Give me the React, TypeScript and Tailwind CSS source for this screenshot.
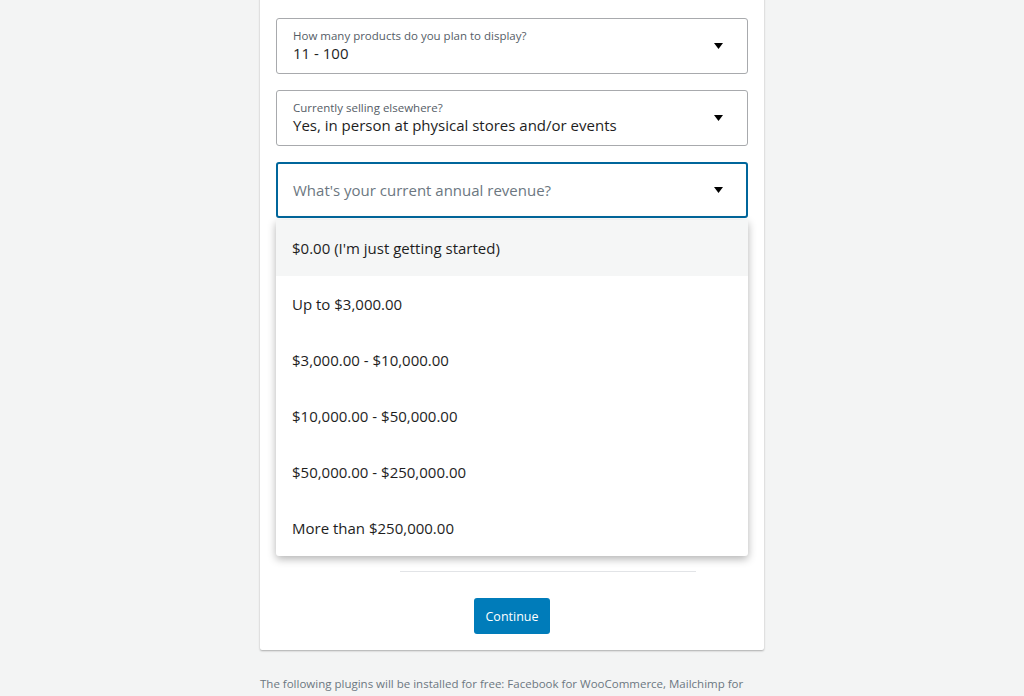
import React from "react";

const font = { fontFamily: '"Open Sans", "Noto Sans", sans-serif' };

function Arrow() {
  return (
    <svg width="9" height="6" viewBox="0 0 9 6" className="shrink-0">
      <path d="M0 0 L9 0 L4.5 6 Z" fill="#000" />
    </svg>
  );
}

function SelectBox({ label, value }: { label: string; value: string }) {
  return (
    <div className="h-[56px] rounded-[3px] border border-[#a8aaad] bg-white flex items-center pl-4 pr-[24px]">
      <div className="flex-1 flex flex-col pb-[2px]">
        <span className="text-[11.5px] leading-[15px] text-[#555d66]">{label}</span>
        <span className="text-[15px] leading-[20px] text-[#1e1e1e]">{value}</span>
      </div>
      <Arrow />
    </div>
  );
}

const options = [
  "$0.00 (I'm just getting started)",
  "Up to $3,000.00",
  "$3,000.00 - $10,000.00",
  "$10,000.00 - $50,000.00",
  "$50,000.00 - $250,000.00",
  "More than $250,000.00",
];

export default function App() {
  return (
    <div className="min-h-[696px] w-full bg-[#f3f4f4] overflow-hidden" style={font}>
      <div className="w-[504px] mx-auto">
        <div className="-mt-2 bg-white rounded-b-[2px] shadow-[0_1px_2px_rgba(0,0,0,0.3)] px-4 pt-[26px] pb-[16px]">
          <div className="flex flex-col gap-4">
            <SelectBox label="How many products do you plan to display?" value="11 - 100" />
            <SelectBox label="Currently selling elsewhere?" value="Yes, in person at physical stores and/or events" />
            <div className="relative">
              <div className="h-[56px] rounded-[3px] border-2 border-[#00669b] bg-white flex items-center pl-[15px] pr-[23px]">
                <span className="flex-1 text-[15px] text-[#6c7781] pt-[1px]">What's your current annual revenue?</span>
                <Arrow />
              </div>
              <div className="absolute left-0 right-0 top-[58px] z-10 bg-white rounded-b-[3px] shadow-[0_3px_8px_rgba(0,0,0,0.3)]">
                {options.map((o, i) => (
                  <div
                    key={o}
                    className={`h-[56px] flex items-center pl-4 text-[15px] text-[#1e1e1e] ${i === 0 ? "bg-[#f5f6f6]" : ""}`}
                  >
                    {o}
                  </div>
                ))}
              </div>
            </div>
          </div>
          <div className="h-[353px]" />
          <div className="ml-[124px] w-[296px] border-t border-[#e2e4e7]" />
          <div className="flex justify-center pt-[26px]">
            <button className="h-[36px] w-[76px] rounded-[3px] bg-[#007cba] text-white text-[12.5px] pt-[3px]">Continue</button>
          </div>
        </div>
        <p className="mt-[26px] text-[11.5px] leading-[16px] text-[#6c7781]">
          The following plugins will be installed for free: Facebook for WooCommerce, Mailchimp for WooCommerce, Google Ads
        </p>
      </div>
    </div>
  );
}
